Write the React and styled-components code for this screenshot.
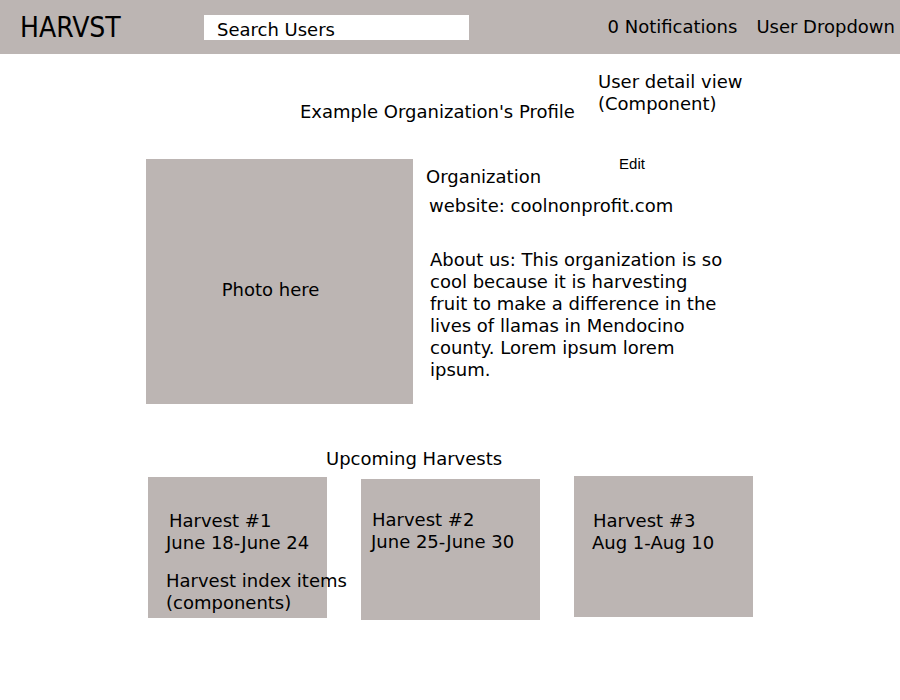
import styled, { createGlobalStyle } from 'styled-components';

const GlobalStyle = createGlobalStyle`
  body {
    margin: 0;
    background: #ffffff;
    color: #000000;
    font-family: "DejaVu Sans", sans-serif;
    font-size: 18px;
  }
`;

const gray = '#bcb5b3';

const Header = styled.header`
  display: flex;
  align-items: center;
  height: 54px;
  padding: 0 5px 0 20px;
  background: ${gray};
`;

const Logo = styled.div`
  font-family: "Liberation Sans Narrow", "DejaVu Sans Condensed", sans-serif;
  font-size: 28px;
  line-height: 1;
  margin-top: 2px;
  width: 102px;
`;

const SearchBox = styled.div`
  display: flex;
  align-items: flex-end;
  margin-left: 82px;
  width: 252px;
  height: 25px;
  padding-left: 13px;
  background: #ffffff;
  line-height: 20px;
`;

const NavRight = styled.nav`
  display: flex;
  gap: 19px;
  margin-left: auto;
  line-height: 22px;
`;

const Main = styled.main`
  position: relative;
  display: flex;
  flex-direction: column;
  align-items: flex-start;
  padding: 47px 0 40px 146px;
  line-height: 22px;
`;

const Note = styled.div`
  position: absolute;
  left: ${({ $left }) => $left}px;
  top: ${({ $top }) => $top}px;
  line-height: 22px;
  white-space: nowrap;
`;

const Heading = styled.h2`
  margin: 0 0 0 ${({ $indent }) => $indent}px;
  font-size: 18px;
  font-weight: normal;
  line-height: 22px;
`;

const ProfileRow = styled.section`
  display: flex;
  margin-top: 36px;
`;

const Photo = styled.div`
  display: flex;
  align-items: center;
  justify-content: center;
  width: 267px;
  height: 245px;
  box-sizing: border-box;
  padding: 16px 18px 0 0;
  background: ${gray};
`;

const Details = styled.div`
  display: flex;
  flex-direction: column;
  margin: -3px 0 0 13px;
`;

const DetailHead = styled.div`
  display: flex;
  align-items: flex-start;
`;

const OrgName = styled.div`
  margin-top: 10px;
`;

const EditLink = styled.a`
  margin-left: 78px;
  font-family: "Liberation Sans", sans-serif;
  font-size: 15px;
  line-height: 16px;
  color: #000000;
  text-decoration: none;
`;

const Website = styled.div`
  margin: 7px 0 0 3px;
`;

const About = styled.p`
  width: 296px;
  margin: 32px 0 0 4px;
`;

const HarvestRow = styled.section`
  display: flex;
  gap: 34px;
  margin: 7px 0 0 2px;
`;

const Card = styled.div`
  position: relative;
  width: 179px;
  height: 141px;
  box-sizing: border-box;
  margin-top: ${({ $shift }) => $shift}px;
  padding: ${({ $padY }) => $padY}px 0 0 ${({ $padX }) => $padX}px;
  background: ${gray};
`;

const CardTitle = styled.div`
  margin-left: ${({ $nudge }) => $nudge}px;
`;

const harvests = [
  { title: 'Harvest #1', dates: 'June 18-June 24', padX: 18, padY: 33, shift: 0, nudge: 3 },
  { title: 'Harvest #2', dates: 'June 25-June 30', padX: 10, padY: 30, shift: 2, nudge: 1 },
  { title: 'Harvest #3', dates: 'Aug 1-Aug 10', padX: 18, padY: 34, shift: -1, nudge: 1 },
];

export default function App() {
  return (
    <>
      <GlobalStyle />
      <Header>
        <Logo>HARVST</Logo>
        <SearchBox>Search Users</SearchBox>
        <NavRight>
          <span>0 Notifications</span>
          <span>User Dropdown</span>
        </NavRight>
      </Header>
      <Main>
        <Note $left={598} $top={17}>User detail view<br />(Component)</Note>
        <Heading $indent={154}>Example Organization's Profile</Heading>
        <ProfileRow>
          <Photo>Photo here</Photo>
          <Details>
            <DetailHead>
              <OrgName>Organization</OrgName>
              <EditLink href="#">Edit</EditLink>
            </DetailHead>
            <Website>website: coolnonprofit.com</Website>
            <About>
              About us: This organization is so cool because it is harvesting fruit to make a
              difference in the lives of llamas in Mendocino county. Lorem ipsum lorem ipsum.
            </About>
          </Details>
        </ProfileRow>
        <Heading $indent={180} style={{ marginTop: 44 }}>Upcoming Harvests</Heading>
        <HarvestRow>
          {harvests.map((h, i) => (
            <Card key={h.title} $padX={h.padX} $padY={h.padY} $shift={h.shift}>
              <CardTitle $nudge={h.nudge}>{h.title}</CardTitle>
              <div>{h.dates}</div>
              {i === 0 && (
                <Note $left={18} $top={93}>Harvest index items<br />(components)</Note>
              )}
            </Card>
          ))}
        </HarvestRow>
      </Main>
    </>
  );
}
